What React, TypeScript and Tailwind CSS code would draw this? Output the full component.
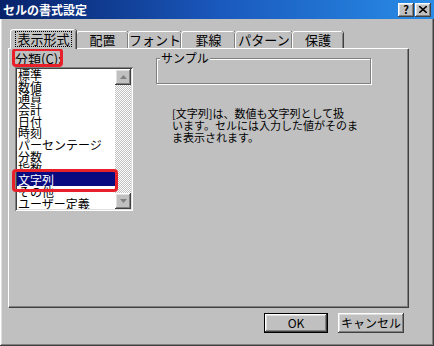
import React from "react";

const raised =
  "shadow-[inset_-1px_-1px_0_#404040,inset_1px_1px_0_#ffffff,inset_-2px_-2px_0_#808080,inset_2px_2px_0_#dfdfdf]";
const sunken =
  "shadow-[inset_1px_1px_0_#808080,inset_-1px_-1px_0_#ffffff,inset_2px_2px_0_#404040,inset_-2px_-2px_0_#dfdfdf]";

const categories = [
  "標準",
  "数値",
  "通貨",
  "会計",
  "日付",
  "時刻",
  "パーセンテージ",
  "分数",
  "指数",
  "文字列",
  "その他",
  "ユーザー定義",
];

const tabs = [
  { label: "配置", w: "w-[52px]" },
  { label: "フォント", w: "w-[53px]" },
  { label: "罫線", w: "w-[54px]" },
  { label: "パターン", w: "w-[57px]" },
  { label: "保護", w: "w-[51px]" },
];

function ScrollArrow({ up }: { up?: boolean }) {
  return (
    <div className={`flex h-[16px] w-[16px] items-center justify-center bg-[#c0c0c0] ${raised}`}>
      <svg width="7" height="4" viewBox="0 0 7 4">
        {up ? <path d="M3.5 0 L7 4 L0 4 Z" fill="#808080" /> : <path d="M0 0 L7 0 L3.5 4 Z" fill="#808080" />}
      </svg>
    </div>
  );
}

export default function App() {
  return (
    <div
      className={`flex h-[346px] w-[434px] flex-col bg-[#c0c0c0] px-[2px] pb-[2px] font-['Noto_Sans_CJK_JP',sans-serif] text-black ${raised}`}
    >
      {/* タイトルバー */}
      <div className="-mx-[2px] flex h-[19px] items-center justify-between bg-gradient-to-r from-[#08226a] via-[#1a58bc] to-[#2a8ce6] pl-[3px] pr-[3px]">
        <span className="text-[12px] font-bold leading-none text-white">セルの書式設定</span>
        <div className="flex gap-[1px]">
          <div className={`flex h-[14px] w-[16px] items-center justify-center bg-[#c0c0c0] text-[11px] font-bold leading-none ${raised}`}>
            ?
          </div>
          <div className={`flex h-[14px] w-[16px] items-center justify-center bg-[#c0c0c0] ${raised}`}>
            <svg width="8" height="7" viewBox="0 0 8 7">
              <path d="M0 0 L8 7 M8 0 L0 7" stroke="#000" strokeWidth="1.6" />
            </svg>
          </div>
        </div>
      </div>

      {/* タブ */}
      <div className="ml-[8px] mt-[10px] flex h-[19px] items-end text-[13px]">
        <div className="relative z-10 -mb-[1px] flex h-[20px] w-[66px] items-start justify-center rounded-t-[3px] border-l border-t border-white bg-[#c0c0c0] pt-[1px] shadow-[inset_-1px_0_0_#808080,1px_0_0_#404040]">
          <span className="border border-dotted border-black px-[1px] leading-[14px]">表示形式</span>
        </div>
        {tabs.map((t) => (
          <div
            key={t.label}
            className={`flex h-[17px] ${t.w} items-start justify-center rounded-t-[3px] border-l border-t border-white pt-[1px] leading-[14px] shadow-[inset_-1px_0_0_#808080,1px_0_0_#404040]`}
          >
            {t.label}
          </div>
        ))}
      </div>

      {/* パネル */}
      <div className="ml-[6px] flex h-[259px] w-[400px] border-l border-t border-white shadow-[inset_-1px_-1px_0_#808080,1px_1px_0_#404040]">
        <div className="ml-[6px] flex w-[118px] flex-col pt-[1px]">
          <div className="relative h-[17px] text-[13px] leading-[17px]">
            分類(<span className="underline">C</span>):
            <div className="absolute -left-[3px] -top-[2px] h-[19px] w-[51px] rounded-[4px] border-[3px] border-[#e8202a]" />
          </div>
          <div className={`relative flex h-[144px] w-[118px] bg-white p-[2px] ${sunken}`}>
            <div className="flex flex-1 flex-col overflow-hidden text-[12px]">
              {categories.map((c) => {
                const sel = c === "文字列";
                return (
                  <div
                    key={c}
                    className={
                      sel
                        ? "-mt-[2px] h-[13.7px] shrink-0 bg-[#0a0a80] pl-[1px] leading-[15px] text-white"
                        : "h-[11.7px] shrink-0 pl-[1px] leading-[12px]"
                    }
                  >
                    {c}
                  </div>
                );
              })}
            </div>
            <div className="flex w-[16px] flex-col">
              <ScrollArrow up />
              <div className="flex-1 bg-[repeating-conic-gradient(#c0c0c0_0%_25%,#ffffff_0%_50%)] bg-[length:2px_2px]" />
              <ScrollArrow />
            </div>
            <div className="absolute -left-[3px] top-[102px] h-[23px] w-[106px] rounded-[4px] border-[3px] border-[#e8202a]" />
          </div>
        </div>

        <div className="ml-[23px] flex flex-col pt-[9px]">
          <div className="relative h-[26px] w-[215px] border border-[#808080] shadow-[1px_1px_0_#ffffff,inset_1px_1px_0_#ffffff]">
            <span className="absolute -top-[9px] left-[3px] bg-[#c0c0c0] px-[1px] text-[12px] leading-[16px]">
              サンプル
            </span>
          </div>
          <p className="ml-[16px] mt-[23px] text-[11px] leading-[12px]">
            [文字列]は、数値も文字列として扱
            <br />
            います。セルには入力した値がそのま
            <br />
            ま表示されます。
          </p>
        </div>
      </div>

      {/* ボタン */}
      <div className="mr-[28px] mt-[6px] flex justify-end gap-[10px] text-[12px]">
        <div className="border border-black">
          <div className={`flex h-[18px] w-[62px] items-center justify-center bg-[#c0c0c0] ${raised}`}>OK</div>
        </div>
        <div className={`flex h-[20px] w-[66px] items-center justify-center bg-[#c0c0c0] ${raised}`}>
          キャンセル
        </div>
      </div>
    </div>
  );
}
